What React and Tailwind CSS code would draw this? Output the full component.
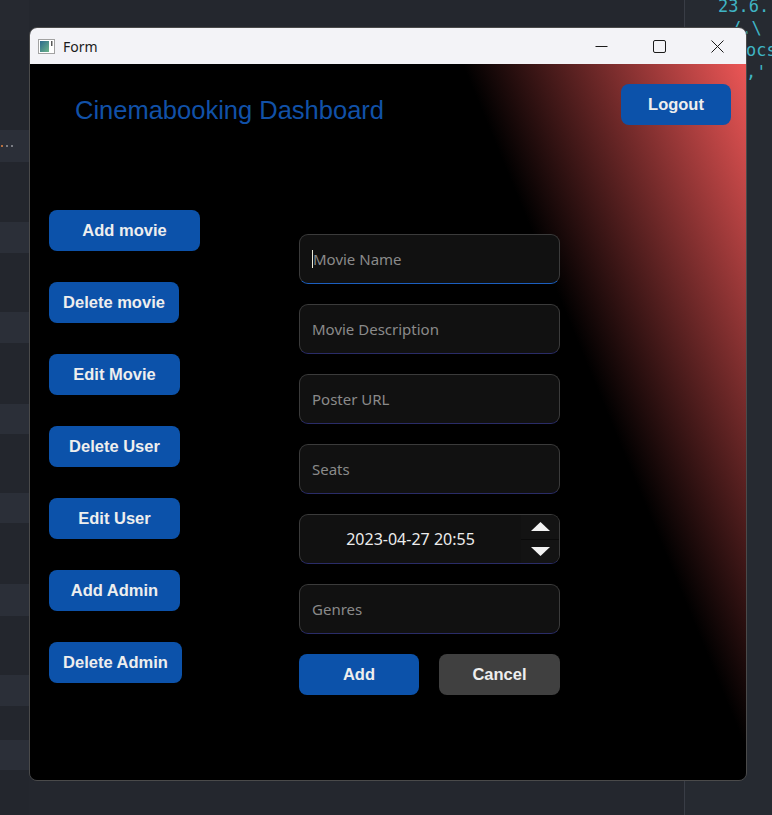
import React from "react";

const bands = [
  "h-[40px] bg-[#262930]",
  "h-[90px] bg-[#23262d]",
  "h-[32px] bg-[#2b2f38]",
  "h-[60px] bg-[#23262d]",
  "h-[31px] bg-[#2b2f38]",
  "h-[59px] bg-[#23262d]",
  "h-[31px] bg-[#2b2f38]",
  "h-[61px] bg-[#23262d]",
  "h-[30px] bg-[#2b2f38]",
  "h-[59px] bg-[#23262d]",
  "h-[30px] bg-[#2b2f38]",
  "h-[61px] bg-[#23262d]",
  "h-[32px] bg-[#2b2f38]",
  "h-[59px] bg-[#23262d]",
  "h-[31px] bg-[#2b2f38]",
  "h-[34px] bg-[#23262d]",
  "h-[30px] bg-[#2b2f38]",
  "flex-1 bg-[#23262d]",
];

const sideButtons = [
  { label: "Add movie", w: "w-[151px]" },
  { label: "Delete movie", w: "w-[130px]" },
  { label: "Edit Movie", w: "w-[131px]" },
  { label: "Delete User", w: "w-[131px]" },
  { label: "Edit User", w: "w-[131px]" },
  { label: "Add Admin", w: "w-[131px]" },
  { label: "Delete Admin", w: "w-[133px]" },
];

function Btn({ className = "", children }) {
  return (
    <button
      className={`flex h-[41px] items-center justify-center rounded-[8px] text-[16.5px] font-bold text-[#eeeeee] ${className}`}
    >
      {children}
    </button>
  );
}

function Field({ children, focused }) {
  return (
    <div
      className={`flex h-[50px] items-center rounded-[9px] border border-[#3b3b3b] bg-[#111111] px-[12px] font-['Noto_Sans',sans-serif] text-[15px] text-[#8a8a8a] ${
        focused ? "border-b-[#1c5fc0]" : "border-b-[#2a2c68]"
      }`}
    >
      {children}
    </div>
  );
}

function Backdrop() {
  return (
    <div className="flex h-full w-full">
      <div className="flex w-[29px] flex-col">
        {bands.map((b, i) => (
          <div key={i} className={`flex items-center gap-[3px] pl-[1px] ${b}`}>
            {i === 2 && (
              <>
                <span className="h-[2px] w-[2px] bg-[#b8703f]" />
                <span className="h-[2px] w-[2px] bg-[#7a7d84]" />
                <span className="h-[2px] w-[2px] bg-[#7a7d84]" />
              </>
            )}
          </div>
        ))}
      </div>
      <div className="flex-1 bg-[#24272e]" />
      <div className="w-[88px] overflow-hidden border-l border-[#393d46] bg-[#262a31] font-['DejaVu_Sans_Mono',monospace] text-[17px] leading-[22px] text-[#3fb4c4]">
        <div className="-mt-[5px] pl-[33px] whitespace-pre">23.6.</div>
        <div className="pl-[46px] whitespace-pre">/.\</div>
        <div className="pl-[61px] whitespace-pre">ocs</div>
        <div className="pl-[61px] whitespace-pre">,'</div>
      </div>
    </div>
  );
}

function TitleBar() {
  return (
    <div className="flex h-[36px] items-center bg-[#f3f3f7] font-['Noto_Sans',sans-serif]">
      <svg width="17" height="15" viewBox="0 0 17 15" className="ml-[8px]">
        <defs>
          <linearGradient id="ic" x1="0" y1="0" x2="1" y2="1">
            <stop offset="0" stopColor="#2b6a8e" />
            <stop offset="1" stopColor="#6db489" />
          </linearGradient>
        </defs>
        <rect x="0.5" y="0.5" width="16" height="14" fill="#ffffff" stroke="#a2a2a2" />
        <rect x="2" y="2" width="9" height="11" fill="url(#ic)" />
        <rect x="13" y="2" width="1.5" height="5" fill="#5a5a5a" />
      </svg>
      <span className="ml-[8px] text-[14px] text-[#1b1b1b]">Form</span>
      <div className="ml-auto flex h-full">
        <div className="flex w-[58px] items-center justify-center">
          <svg width="13" height="13" viewBox="0 0 13 13">
            <path d="M0.5 6.5H12.5" stroke="#1b1b1b" strokeWidth="1" />
          </svg>
        </div>
        <div className="flex w-[58px] items-center justify-center">
          <svg width="13" height="13" viewBox="0 0 13 13">
            <rect x="0.5" y="0.5" width="12" height="12" rx="1.5" fill="none" stroke="#1b1b1b" />
          </svg>
        </div>
        <div className="flex w-[58px] items-center justify-center">
          <svg width="13" height="13" viewBox="0 0 13 13">
            <path d="M0.5 0.5L12.5 12.5M12.5 0.5L0.5 12.5" stroke="#1b1b1b" strokeWidth="1" />
          </svg>
        </div>
      </div>
    </div>
  );
}

export default function App() {
  return (
    <div className="relative h-[815px] w-[772px] overflow-hidden bg-[#24272e] font-['Liberation_Sans',sans-serif]">
      <Backdrop />

      {/* the Qt window */}
      <div className="absolute left-[29px] top-[27px] flex w-[718px] flex-col overflow-hidden rounded-[8px] border border-[#4a4a4a]">
        <TitleBar />
        <div className="flex h-[716px] flex-col bg-[linear-gradient(67.5deg,#000000_72%,#ec5656_100%)]">
          <div className="flex items-start justify-between pl-[45px] pr-[15px] pt-[20px]">
            <h1 className="mt-[11px] text-[25.5px] leading-[30px] text-[#1151a8]">
              Cinemabooking Dashboard
            </h1>
            <Btn className="w-[110px] bg-[#0c52aa]">Logout</Btn>
          </div>

          <div className="mt-[85px] flex pl-[19px]">
            <div className="flex w-[250px] flex-col items-start gap-[31px]">
              {sideButtons.map((b) => (
                <Btn key={b.label} className={`${b.w} bg-[#0c52aa]`}>
                  {b.label}
                </Btn>
              ))}
            </div>

            <div className="mt-[24px] flex w-[261px] flex-col gap-[20px]">
              <Field focused>
                <span className="h-[18px] w-px bg-[#ecebd8]" />
                <span>Movie Name</span>
              </Field>
              <Field>Movie Description</Field>
              <Field>Poster URL</Field>
              <Field>Seats</Field>
              <div className="flex h-[50px] overflow-hidden rounded-[9px] border border-[#3b3b3b] border-b-[#2a2c68] bg-[#111111] font-['Noto_Sans',sans-serif]">
                <div className="flex flex-1 items-center justify-center text-[16px] text-[#ececec]">
                  2023-04-27 20:55
                </div>
                <div className="flex w-[38px] flex-col bg-[#131313]">
                  <div className="flex flex-1 items-center justify-center border-b border-[#0a0a0a]">
                    <svg width="19" height="9" viewBox="0 0 19 9">
                      <path d="M9.5 0L19 9H0Z" fill="#f2f2f2" />
                    </svg>
                  </div>
                  <div className="flex flex-1 items-center justify-center">
                    <svg width="19" height="9" viewBox="0 0 19 9">
                      <path d="M0 0H19L9.5 9Z" fill="#f2f2f2" />
                    </svg>
                  </div>
                </div>
              </div>
              <Field>Genres</Field>
              <div className="flex gap-[20px]">
                <Btn className="w-[120px] bg-[#0c52aa]">Add</Btn>
                <Btn className="w-[121px] bg-[#404040]">Cancel</Btn>
              </div>
            </div>
          </div>
        </div>
      </div>
    </div>
  );
}
